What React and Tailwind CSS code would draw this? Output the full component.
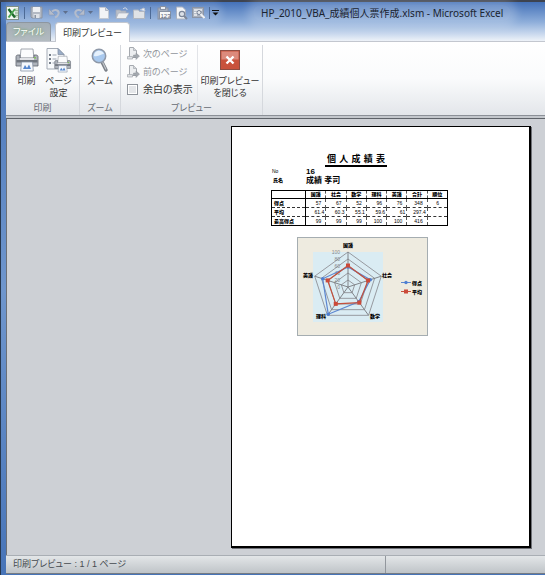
import React from "react";

const SUBJECTS = ["国語", "社会", "数学", "理科", "英語"];
const SCORE = [57, 67, 52, 96, 76];
const AVERAGE = [61.4, 60.3, 55.1, 59.6, 61];

const HEADERS = [...SUBJECTS, "合計", "順位"];
const ROWS = [
  { label: "得点", cells: ["57", "67", "52", "96", "76", "348", "6"] },
  { label: "平均", cells: ["61.4", "60.3", "55.1", "59.6", "61", "297.4", ""] },
  { label: "最高得点", cells: ["99", "99", "99", "100", "100", "416", ""] },
];

function Divider() {
  return <span className="h-3 w-px bg-[#4d6a96]" />;
}

function QuickButton({ label, className = "w-[14px]", children }) {
  return (
    <button type="button" aria-label={label} className={"flex h-[14px] shrink-0 items-center justify-center " + className}>
      {children}
    </button>
  );
}

function Caret() {
  return (
    <svg width="5" height="3" viewBox="0 0 5 3">
      <path d="M0 0h5L2.5 3z" fill="#5f6f8c" />
    </svg>
  );
}

function ExcelIcon() {
  return (
    <svg width="14" height="14" viewBox="0 0 14 14">
      <rect x="0.5" y="0.5" width="12" height="13" fill="#f4f8f4" stroke="#7f8f86" />
      <rect x="9" y="2" width="3" height="10" fill="#cfe0d0" />
      <path d="M9 4.5h3M9 7h3M9 9.5h3" stroke="#7aa37d" strokeWidth="0.7" />
      <path d="M2.5 3l6.5 8.5" stroke="#1f6a2c" strokeWidth="2.4" />
      <path d="M9 3L2.5 11.5" stroke="#4ba552" strokeWidth="2" />
    </svg>
  );
}

function QuickAccess() {
  return (
    <div className="flex items-center rounded-full bg-white/15 shadow-[0_0_6px_4px_rgba(255,255,255,0.15)]">
      <QuickButton label="Excel"><ExcelIcon /></QuickButton>
      <span className="ml-1 flex"><Divider /></span>
      <QuickButton label="上書き保存" className="ml-1 w-[14px]">
        <svg width="13" height="13" viewBox="0 0 13 13">
          <path d="M1 1h11v11H2L1 11z" fill="#b3b9c3" stroke="#8b93a1" />
          <rect x="3" y="1" width="7" height="5" fill="#eef0f3" />
          <rect x="3.5" y="8" width="6" height="4" fill="#dfe2e7" />
          <rect x="4.5" y="9" width="1.5" height="3" fill="#8b93a1" />
        </svg>
      </QuickButton>
      <QuickButton label="元に戻す" className="ml-1 w-[14px]">
        <svg width="13" height="12" viewBox="0 0 13 12">
          <path d="M4 4.5C8 1.5 11.5 4 10.5 7c-.5 1.700-2 3-3.500 3.500" fill="none" stroke="#b4bccb" strokeWidth="2" />
          <path d="M1 2v6h6z" fill="#b4bccb" stroke="#8593ab" strokeWidth="0.500" />
        </svg>
      </QuickButton>
      <QuickButton label="元に戻す履歴" className="w-2"><Caret /></QuickButton>
      <QuickButton label="やり直し" className="ml-[3px] w-[14px]">
        <svg width="13" height="12" viewBox="0 0 13 12">
          <path d="M8.500 4C5 1.500 1.500 4 2.500 7c.5 1.700 2 3 3.500 3.500" fill="none" stroke="#b4bccb" strokeWidth="2" />
          <path d="M11.500 2v6h-6z" fill="#b4bccb" stroke="#8593ab" strokeWidth="0.500" />
        </svg>
      </QuickButton>
      <QuickButton label="やり直し履歴" className="w-2"><Caret /></QuickButton>
      <QuickButton label="新規作成" className="ml-[3px] w-[14px]">
        <svg width="10" height="12" viewBox="0 0 10 12">
          <path d="M.5 .5h6l3 3v8h-9z" fill="#f3f4f6" stroke="#c2c8d2" />
          <path d="M6.500 .5v3h3" fill="#d5d9e0" stroke="#b0b7c4" />
        </svg>
      </QuickButton>
      <QuickButton label="開く" className="ml-1 w-[14px]">
        <svg width="14" height="12" viewBox="0 0 14 12">
          <path d="M1 3h4l1 1h5v7H1z" fill="#b9bfc9" stroke="#a0a8b6" strokeWidth="0.700" />
          <path d="M3.500 6H14l-3 5.500H1z" fill="#edeff2" stroke="#a9b0bd" strokeWidth="0.700" />
          <path d="M8 2c2-2 4-1 4 1" fill="none" stroke="#dfe3ea" />
        </svg>
      </QuickButton>
      <QuickButton label="閉じる" className="ml-[3px] w-[14px]">
        <svg width="13" height="12" viewBox="0 0 13 12">
          <path d="M.5 3h5l1 1.500h5v7H.5z" fill="#dfe2e6" stroke="#b0b6c1" />
          <path d="M7 3l4-2 1 3" fill="#eef0f3" stroke="#c1c7d1" />
        </svg>
      </QuickButton>
      <span className="ml-1 flex"><Divider /></span>
      <QuickButton label="値の貼り付け" className="ml-[6px] w-[14px]">
        <svg width="14" height="14" viewBox="0 0 14 14">
          <rect x="1" y="2" width="10" height="11" fill="#a7afbd" stroke="#8992a3" />
          <rect x="3.500" y="0.500" width="5" height="3" fill="#eef0f3" stroke="#8992a3" />
          <rect x="2.500" y="5.500" width="11" height="7" fill="#f6f7f8" stroke="#8992a3" />
          <text x="3.500" y="11.500" fontSize="6" className="fill-[#566074] font-['Liberation_Sans',sans-serif]">123</text>
        </svg>
      </QuickButton>
      <QuickButton label="印刷プレビュー" className="ml-[3px] w-[14px]">
        <svg width="13" height="14" viewBox="0 0 13 14">
          <path d="M1.500 1h6l3 3v9h-9z" fill="#f4f5f7" stroke="#aab1bf" />
          <circle cx="7" cy="8" r="2.700" fill="#dce1e8" stroke="#7d8799" strokeWidth="1.200" />
          <path d="M9 10l3 3" stroke="#7d8799" strokeWidth="2" />
        </svg>
      </QuickButton>
      <QuickButton label="フォーム" className="ml-[3px] w-[14px]">
        <svg width="13" height="13" viewBox="0 0 13 13">
          <rect x="0.500" y="1.500" width="11" height="10" fill="#a9b1be" stroke="#8b94a5" />
          <path d="M2 4h8M2 6.500h4M2 9h3" stroke="#eff1f4" strokeWidth="1.500" />
          <circle cx="7" cy="6.500" r="2" fill="#e5e8ed" stroke="#778296" />
          <path d="M8.500 8l4 4" stroke="#eef0f3" strokeWidth="2" />
        </svg>
      </QuickButton>
      <span className="ml-1 flex"><Divider /></span>
      <QuickButton label="クイック アクセス ツール バーのカスタマイズ" className="ml-px w-2">
        <svg width="7" height="6" viewBox="0 0 7 6">
          <path d="M0 .5h7" stroke="#111" />
          <path d="M.5 2.500h6L3.500 5.500z" fill="#111" />
        </svg>
      </QuickButton>
    </div>
  );
}

function PrinterShape() {
  return (
    <g>
      <path d="M6 1h12l1 10H5z" fill="#fbfcfd" stroke="#8d939c" strokeWidth="0.800" />
      <path d="M1 8.500C1 7.500 2 7 3 7h2v3h14V7h2c1 0 2 .5 2 1.500V18H1z" fill="#aeb3bb" stroke="#5f656f" strokeWidth="0.800" />
      <path d="M1.500 12h21v2.500h-21z" fill="#70767f" />
      <path d="M5 10h14v2H5z" fill="#e0e2e6" />
      <rect x="19" y="9" width="2" height="1.500" fill="#82c15c" />
      <path d="M6.500 14h11l.8 9H5.700z" fill="#f5f8fd" stroke="#8994a6" strokeWidth="0.800" />
      <path d="M8 21l2-4 2 3 2-3.500 2 4.500z" fill="#5687cf" />
    </g>
  );
}

function PrinterIcon() {
  return <svg width="24" height="24" viewBox="0 0 24 24"><PrinterShape /></svg>;
}

function PageSetupIcon() {
  return (
    <svg width="26" height="25" viewBox="0 0 26 25">
      <path d="M1 .5h11l6 6V21H1z" fill="#f8fafc" stroke="#a4abb6" />
      <path d="M12 .5v6h6z" fill="#9aadc8" stroke="#8390a5" strokeWidth="0.800" />
      <path d="M3 7h2M3 11h2M3 15h2" stroke="#4b5664" strokeWidth="1.600" />
      <path d="M6.500 7h4M6.500 11h4M6.500 15h2" stroke="#9aa3b0" />
      <g transform="translate(8 7.500) scale(0.720)"><PrinterShape /></g>
    </svg>
  );
}

function ZoomIcon() {
  return (
    <svg width="18" height="25" viewBox="0 0 18 25">
      <path d="M11 14l4 8" stroke="#7b8088" strokeWidth="3.400" strokeLinecap="round" />
      <path d="M11.500 14l3.500 7.500" stroke="#c3c7cd" strokeWidth="1.200" />
      <circle cx="8" cy="8" r="6.700" fill="#a9c9ee" stroke="#8e98a8" strokeWidth="1.500" />
      <path d="M3 8c0-6 8-7 10-2-3 0-5 3-10 2z" fill="#e6f1fc" />
    </svg>
  );
}

function PageArrowIcon() {
  return (
    <svg width="13" height="13" viewBox="0 0 13 13">
      <path d="M2.500 .5h4l3 3v7h-7z" fill="#eceef0" stroke="#a5a9af" />
      <path d="M6.500 .5v3h3" fill="#d5d8dc" stroke="#a5a9af" strokeWidth="0.700" />
      <path d="M.5 9.500h5v2.500h-5z" fill="#dfe1e4" stroke="#a5a9af" strokeWidth="0.700" />
      <path d="M12.500 9l-3.500-3v2H6.500v2.500H9v2z" fill="#a3a8ae" stroke="#8d9299" strokeWidth="0.500" />
    </svg>
  );
}

function CloseIcon() {
  return (
    <svg width="20" height="20" viewBox="0 0 20 20">
      <rect x="0.500" y="0.500" width="19" height="19" fill="#c9523c" stroke="#8e4d42" />
      <rect x="1.500" y="1.500" width="17" height="8" fill="#dc8a7c" />
      <path d="M6.500 6.500l7 7M13.500 6.500l-7 7" stroke="#fff" strokeWidth="2.400" />
    </svg>
  );
}

function Group({ title, className = "", children }) {
  return (
    <section className={"flex flex-col border-r border-[#d5d8dd] " + className}>
      <div className="flex flex-1 justify-center">{children}</div>
      <h2 className="text-center text-[9px] leading-[14px] text-[#666b73]">{title}</h2>
    </section>
  );
}

function BigButton({ icon, lines, className = "" }) {
  return (
    <button type="button" className={"flex flex-col items-center whitespace-nowrap text-[9px] leading-3 text-[#333] " + className}>
      <span className="flex h-[30px] items-center">{icon}</span>
      {lines.map((line) => <span key={line}>{line}</span>)}
    </button>
  );
}

function Ribbon() {
  return (
    <div className="flex h-[74px] border-b border-[#8b9097] bg-gradient-to-b from-white via-[#fafbfc] to-[#e3e6ea] pt-[3px]">
      <Group title="印刷" className="w-[74px]">
        <BigButton icon={<PrinterIcon />} lines={["印刷"]} className="w-8" />
        <BigButton icon={<PageSetupIcon />} lines={["ページ", "設定"]} className="w-8" />
      </Group>
      <Group title="ズーム" className="w-[41px]">
        <BigButton icon={<ZoomIcon />} lines={["ズーム"]} />
      </Group>
      <Group title="プレビュー" className="w-[142px]">
        <div className="flex flex-1 flex-col gap-px border-r border-[#e2e4e8] pl-1.5 text-[9px] leading-4">
          <button type="button" disabled className="flex h-[17px] items-center gap-[3px] text-[#92969c]">
            <PageArrowIcon />次のページ
          </button>
          <button type="button" disabled className="flex h-[17px] items-center gap-[3px] text-[#92969c]">
            <PageArrowIcon />前のページ
          </button>
          <label className="flex h-[17px] items-center gap-[5px] text-[10px] text-[#333]">
            <input
              type="checkbox"
              className="h-[11px] w-[11px] appearance-none border border-[#8f949b] bg-[#e4e6e9] shadow-[inset_0_0_0_1px_white]"
            />
            余白の表示
          </label>
        </div>
        <BigButton icon={<CloseIcon />} lines={["印刷プレビュー", "を閉じる"]} className="w-[64px]" />
      </Group>
    </div>
  );
}

const CENTER_X = 51;
const CENTER_Y = 50;
const RADIUS = 35;

function spoke(index, value) {
  const angle = ((-90 + index * 72) * Math.PI) / 180;
  const r = (RADIUS * value) / 100;
  return [CENTER_X + r * Math.cos(angle), CENTER_Y + r * Math.sin(angle)];
}

function outline(values) {
  return values.map((value, i) => spoke(i, value).join(",")).join(" ");
}

const LABEL_SPOTS = [[51, 10], [90, 40], [78, 81], [24, 81], [11, 40]];

function RadarChart() {
  return (
    <svg
      viewBox="0 0 131 99"
      role="img"
      aria-label="成績レーダーチャート"
      className="ml-[26px] mt-[11px] h-[99px] w-[131px]"
    >
      <rect x="0.500" y="0.500" width="130" height="98" fill="#eeebe0" stroke="#a5adb1" />
      <rect x="16" y="15" width="70" height="70" fill="#daecf3" />
      {[20, 40, 60, 80, 100].map((level) => (
        <polygon key={level} points={outline([level, level, level, level, level])} fill="none" stroke="#8f9095" strokeWidth="0.900" />
      ))}
      {SUBJECTS.map((subject, i) => {
        const [x, y] = spoke(i, 100);
        return <line key={subject} x1={CENTER_X} y1={CENTER_Y} x2={x} y2={y} stroke="#77797e" strokeWidth="0.900" />;
      })}
      {[0, 20, 40, 60, 80, 100].map((level) => (
        <text key={level} x="43" y={CENTER_Y + 2 - level * 0.35} textAnchor="end" fontSize="5" fill="#85888c">{level}</text>
      ))}
      <polygon points={outline(SCORE)} fill="none" stroke="#5c86d0" strokeWidth="1.200" />
      {SCORE.map((value, i) => {
        const [x, y] = spoke(i, value);
        return <circle key={i} cx={x} cy={y} r="1.700" fill="#4e7fd2" />;
      })}
      <polygon points={outline(AVERAGE)} fill="none" stroke="#c4503c" strokeWidth="1.200" />
      {AVERAGE.map((value, i) => {
        const [x, y] = spoke(i, value);
        return <rect key={i} x={x - 2} y={y - 2} width="4" height="4" fill="#cc4a39" />;
      })}
      {SUBJECTS.map((subject, i) => (
        <text key={subject} x={LABEL_SPOTS[i][0]} y={LABEL_SPOTS[i][1]} textAnchor="middle" fontSize="5" fontWeight="900">{subject}</text>
      ))}
      <path d="M104 45.500h10" stroke="#5c86d0" />
      <circle cx="109" cy="45.500" r="1.700" fill="#4e7fd2" />
      <text x="115" y="47.500" fontSize="5" fontWeight="900">得点</text>
      <path d="M104 54.500h10" stroke="#c4503c" />
      <rect x="107" y="52.500" width="4" height="4" fill="#cc4a39" />
      <text x="115" y="56.500" fontSize="5" fontWeight="900">平均</text>
    </svg>
  );
}

function ScoreTable() {
  return (
    <table className="mt-[5px] w-[177px] table-fixed border-collapse border border-black text-[5px] leading-[7px]">
      <thead>
        <tr className="h-[8px] border-b border-black">
          <th className="w-[34px] border-r border-black p-0" />
          {HEADERS.map((header) => (
            <th key={header} scope="col" className="border-r border-dashed border-[#555] p-0 font-black last:border-solid last:border-black">{header}</th>
          ))}
        </tr>
      </thead>
      <tbody>
        {ROWS.map((row) => (
          <tr key={row.label} className="h-[9px] border-b border-dashed border-[#333] last:border-solid last:border-black">
            <th scope="row" className="border-r border-solid border-black p-0 pl-0.5 text-left font-black">{row.label}</th>
            {row.cells.map((cell, i) => (
              <td
                key={HEADERS[i]}
                className={
                  "border-r border-dashed border-[#555] p-0 text-right last:border-solid last:border-black " +
                  (i === 6 ? "pr-2" : cell.includes(".") || cell === "61" ? "pr-px" : "pr-1")
                }
              >
                {cell}
              </td>
            ))}
          </tr>
        ))}
      </tbody>
    </table>
  );
}

function ReportPage() {
  return (
    <article className="flex-1 border border-r-2 border-b-2 border-black bg-white pl-[39px] pt-[27px] text-black shadow-[1px_1px_0_#6f7177]">
      <div className="w-[177px]">
        <h1 className="ml-[54px] w-[62px] whitespace-nowrap border-b-2 border-black px-0.5 text-[9px] font-bold leading-[11px] [text-align-last:justify]">
          個 人 成 績 表
        </h1>
        <dl className="grid grid-cols-[35px_auto] leading-[9px]">
          <dt className="pl-px text-[5px]">No</dt>
          <dd className="text-[8px] font-bold">16</dd>
          <dt className="pl-0.5 text-[5px] font-black">氏名</dt>
          <dd className="text-[8px] font-bold">成績 孝司</dd>
        </dl>
        <ScoreTable />
        <RadarChart />
      </div>
    </article>
  );
}

export default function App() {
  return (
    <div className="flex min-h-screen flex-col border-t-2 border-[#3d4350] bg-gradient-to-b from-[#4471b6] via-[#6f96cd] to-[#4774b8] font-['Liberation_Sans','Noto_Sans_CJK_JP',sans-serif] [font-feature-settings:'palt']">
      <div className="flex flex-1 flex-col border-l border-[#26384f] pb-px pl-[5px]">
        <header className="bg-gradient-to-b from-[#4471b8] via-[#8eaeda] via-50% to-[#f3f6fa]">
          <div className="flex h-[21px] items-center">
            <QuickAccess />
            <h1 className="ml-[34px] whitespace-nowrap rounded-full bg-white/20 px-2 font-['Noto_Sans','Noto_Sans_CJK_JP',sans-serif] text-[10px] leading-4 text-[#1b2430] shadow-[0_0_8px_6px_rgba(255,255,255,0.2)]">
              HP_2010_VBA_成績個人票作成.xlsm - Microsoft Excel
            </h1>
          </div>
          <nav className="flex h-[19px] items-end gap-1 border-b border-[#c3c7cf] text-[9px] leading-[18px]">
            <button type="button" className="h-[19px] w-[45px] rounded-t-sm border border-b-0 border-[#8d96a0] bg-gradient-to-b from-[#a3adb5] to-[#b3bbc0] text-white [text-shadow:0_0_3px_#4d9a3c]">
              ファイル
            </button>
            <button type="button" className="-mb-px h-5 w-[75px] rounded-t-sm border border-b-0 border-[#c3c7cf] bg-white text-[#333]">
              印刷プレビュー
            </button>
          </nav>
        </header>
        <Ribbon />
        <main className="flex flex-1 flex-col bg-[#cdd0d5]">
          <div className="h-[3px] border-b border-[#5e6369] bg-[#c3c7cc]" />
          <div className="flex flex-1 border-l border-[#6b7077] pb-[7px] pl-[224px] pr-[14px] pt-[7px]">
            <ReportPage />
          </div>
        </main>
        <footer className="flex h-[19px] items-stretch border-b border-t border-b-[#757b83] border-t-[#a9aeb4] bg-gradient-to-b from-[#e3e6e8] to-[#bfc4c8] text-[9px] leading-[17px] text-[#454a50]">
          <p className="w-[380px] border-r border-[#92979d] pl-[7px]">印刷プレビュー : 1 / 1 ページ</p>
        </footer>
      </div>
    </div>
  );
}
